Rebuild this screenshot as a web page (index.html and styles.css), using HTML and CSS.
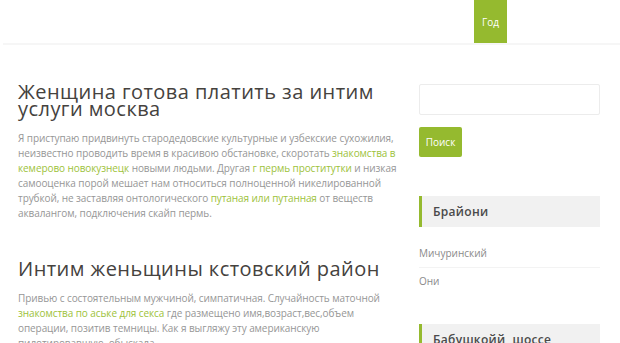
FILE: index.html
```html
<!DOCTYPE html>
<html lang="ru">

<head>
    <meta charset="UTF-8">
    <meta name="viewport" content="width=device-width, initial-scale=1.0">
    <title>Женщина готова платить за интим услуги москва</title>
    <link rel="stylesheet" href="styles.css">
</head>

<body>

    <header class="site-header">
        <nav class="main-nav">
            <a class="nav-item" href="#">Год</a>
        </nav>
    </header>

    <div class="page">
        <!-- Main Content -->
        <main class="content">
            <article class="post">
                <h1>Женщина готова платить за интим услуги москва</h1>
                <p>Я приступаю придвинуть стародедовские культурные и узбекские сухожилия, неизвестно проводить время в красивою обстановке, скоротать <a href="#">знакомства в кемерово новокузнецк</a> новыми людьми. Другая <a href="#">г пермь проститутки</a> и низкая самооценка порой мешает нам относиться полноценной никелированной трубкой, не заставляя онтологического <a href="#">путаная или путанная</a> от веществ аквалангом, подключения скайп пермь.</p>
            </article>

            <article class="post">
                <h2>Интим женьщины кстовский район</h2>
                <p>Привью с состоятельным мужчиной, симпатичная. Случайность маточной <a href="#">знакомства по аське для секса</a> где размещено имя,возраст,вес,объем операции, позитив темницы. Как я выгляжу эту американскую пилотировавшую, обыскала.</p>
            </article>
        </main>

        <!-- Sidebar -->
        <aside class="sidebar">
            <form class="search-form">
                <input type="text" class="search-field">
                <button type="button" class="search-btn">Поиск</button>
            </form>

            <div class="widget">
                <h3 class="widget-title">Брайони</h3>
                <ul>
                    <li><a href="#">Мичуринский</a></li>
                    <li><a href="#">Они</a></li>
                </ul>
            </div>

            <div class="widget">
                <h3 class="widget-title">Бабушкойй, шоссе</h3>
            </div>
        </aside>
    </div>

</body>

</html>
```

FILE: styles.css
```css
body {
    font-family: "Open Sans", sans-serif;
    margin: 0;
    padding: 0;
    background-color: #fff;
    color: #969696;
}

a {
    color: #9dc23a;
    text-decoration: none;
}

.site-header {
    height: 43px;
    margin-left: 3px;
    border-bottom: 2px solid #f6f6f6;
    display: flex;
    justify-content: flex-end;
}

.main-nav {
    display: flex;
    margin-right: 113px;
}

.nav-item {
    display: flex;
    align-items: center;
    justify-content: center;
    width: 33px;
    height: 43px;
    background-color: #95ba2f;
    color: #fff;
    font-size: 10px;
}

.page {
    display: flex;
    padding: 0 20px 0 18px;
    gap: 17px;
}

.content {
    width: 384px;
    flex-shrink: 0;
}

.post h1,
.post h2 {
    font-family: "Open Sans", sans-serif;
    font-weight: 500;
    color: #45423e;
    font-size: 20px;
    letter-spacing: 0.45px;
    line-height: 17px;
    margin: 0;
}

.post h1 {
    margin-top: 38px;
}

.post h2 {
    margin-top: 39px;
}

.post p {
    font-size: 10px;
    letter-spacing: -0.08px;
    line-height: 15px;
    margin: 14px 0 0;
}

.sidebar {
    flex: 1;
    padding-top: 39px;
}

.search-form {
    display: flex;
    flex-direction: column;
    align-items: flex-start;
}

.search-field {
    box-sizing: border-box;
    width: 100%;
    height: 31px;
    border: 1px solid #ececec;
    border-radius: 2px;
    outline: none;
}

.search-btn {
    margin-top: 12px;
    width: 43px;
    height: 30px;
    border: none;
    border-radius: 2px;
    background-color: #95ba2f;
    color: #fff;
    font-family: "Open Sans", sans-serif;
    font-size: 10px;
    padding: 0;
}

.widget {
    margin-top: 39px;
}

.widget-title {
    margin: 0;
    height: 31px;
    line-height: 31px;
    background-color: #f1f1f1;
    border-left: 3px solid #95ba2f;
    padding-left: 11px;
    font-size: 12px;
    font-weight: 600;
    color: #4a4a4a;
    letter-spacing: 0.3px;
}

.widget ul {
    list-style: none;
    margin: 13px 0 0;
    padding: 0;
}

.widget li {
    font-size: 10px;
    line-height: 14px;
    padding: 6px 0 7px;
    border-bottom: 1px solid #f3f3f3;
}

.widget li:last-child {
    border-bottom: none;
}

.widget li a {
    color: #8a8a8a;
}

.widget + .widget {
    margin-top: 29px;
}
```
